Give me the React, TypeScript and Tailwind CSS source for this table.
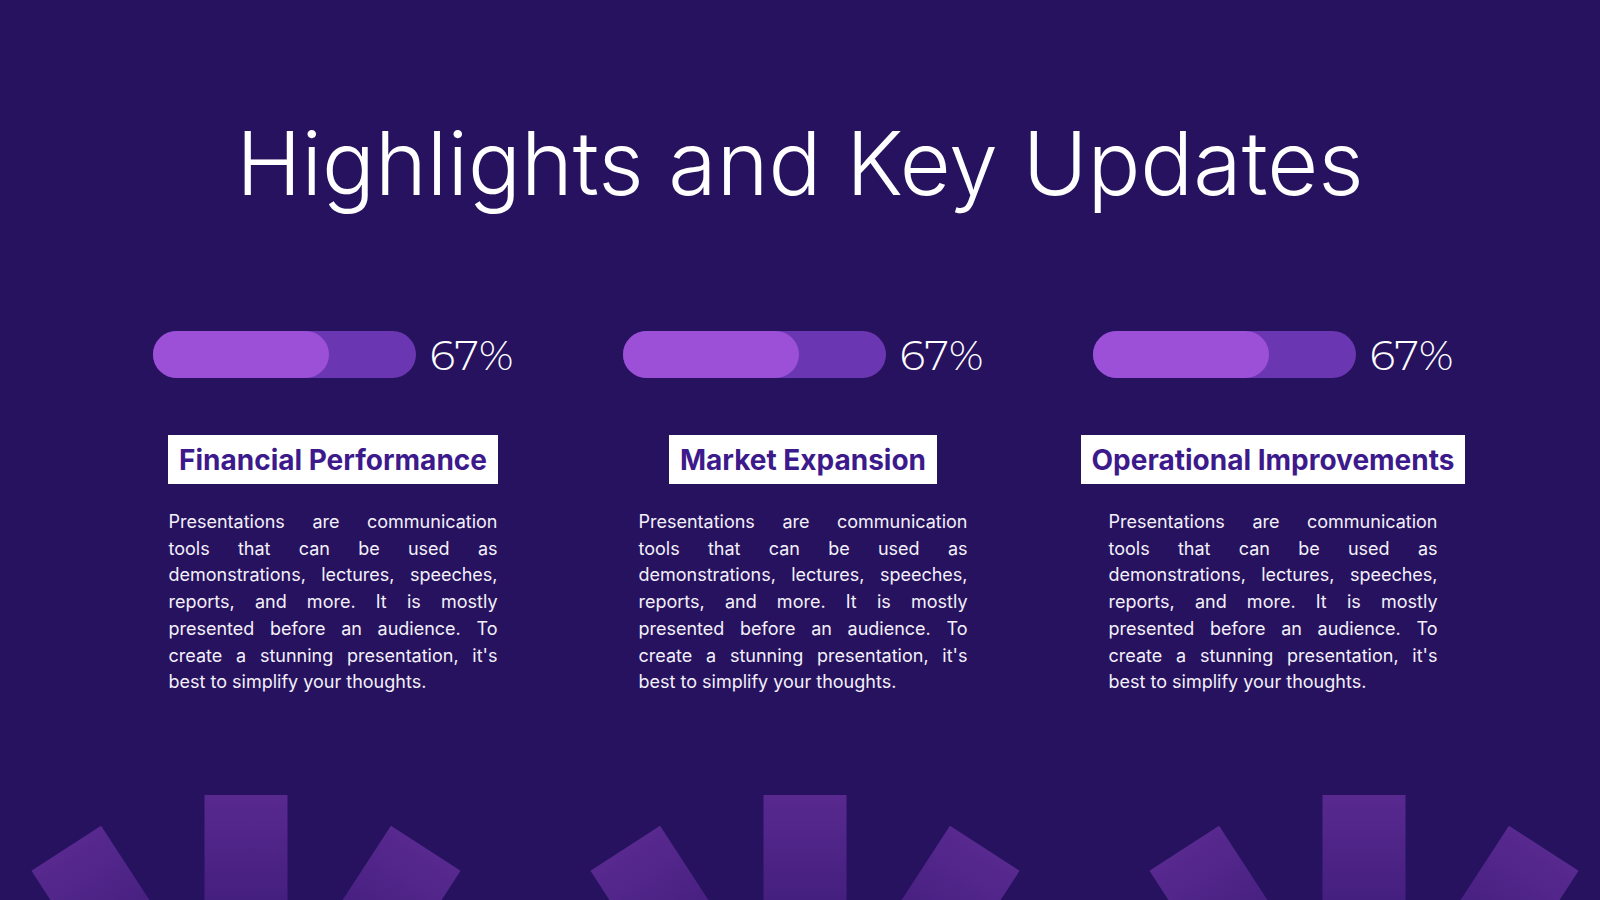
import React from "react";

const body = [
  "Presentations are communication",
  "tools that can be used as",
  "demonstrations, lectures, speeches,",
  "reports, and more. It is mostly",
  "presented before an audience. To",
  "create a stunning presentation, it's",
  "best to simplify your thoughts.",
];

const columns = [
  { title: "Financial Performance", value: 67 },
  { title: "Market Expansion", value: 67 },
  { title: "Operational Improvements", value: 67 },
];

function Fan({ cx }: { cx: number }) {
  // three bars fanning out from a pivot below the page edge
  return (
    <g>
      {[-33, 0, 33].map((a) => (
        <rect
          key={a}
          x={cx - 41.5}
          y={795}
          width={83}
          height={330}
          fill="url(#fanGrad)"
          transform={`rotate(${a} ${cx} 1125)`}
        />
      ))}
    </g>
  );
}

export default function App() {
  return (
    <div className="relative w-[1600px] h-[900px] overflow-hidden bg-[#27125f] text-white">
      {/* Title */}
      <h1 className="pt-[119px] text-center text-[88px] leading-none font-light [font-family:Inter,sans-serif]">
        Highlights and Key Updates
      </h1>

      {/* Three columns */}
      <div className="ml-[113px] mt-[124px] grid w-[1380px] grid-cols-3 gap-x-[30px]">
        {columns.map((col) => (
          <div key={col.title} className="flex flex-col items-center">
            <div className="flex items-center gap-[14px]">
              <div className="h-[47px] w-[263px] rounded-full bg-[#6b36b1]">
                <div
                  className="h-full rounded-full bg-[#9c50d7]"
                  style={{ width: `${col.value}%` }}
                />
              </div>
              <span className="text-[42px] font-light leading-none [font-family:Montserrat,Inter,sans-serif]">
                {col.value}%
              </span>
            </div>

            <div className="mt-[57px] flex h-[49px] items-center bg-white px-[11px]">
              <span className="text-[28px] font-bold leading-none text-[#3d1a8c] [font-family:Inter,sans-serif]">
                {col.title}
              </span>
            </div>

            <div className="mt-[25px] w-[329px] text-[18px] leading-[26.7px] text-[#f3f0fa] [font-family:Inter,sans-serif]">
              {body.map((line, i) => (
                <div
                  key={i}
                  className={
                    i < body.length - 1
                      ? "whitespace-nowrap text-justify [text-align-last:justify]"
                      : "whitespace-nowrap"
                  }
                >
                  {line}
                </div>
              ))}
            </div>
          </div>
        ))}
      </div>

      {/* Bottom decoration */}
      <svg
        className="absolute bottom-0 left-0"
        width="1600"
        height="110"
        viewBox="0 790 1600 110"
      >
        <defs>
          <linearGradient id="fanGrad" x1="0" y1="0" x2="0" y2="1">
            <stop offset="0" stopColor="#58298f" />
            <stop offset="0.35" stopColor="#431e7e" />
            <stop offset="1" stopColor="#2f1668" />
          </linearGradient>
        </defs>
        <Fan cx={246} />
        <Fan cx={805} />
        <Fan cx={1364} />
      </svg>
    </div>
  );
}
